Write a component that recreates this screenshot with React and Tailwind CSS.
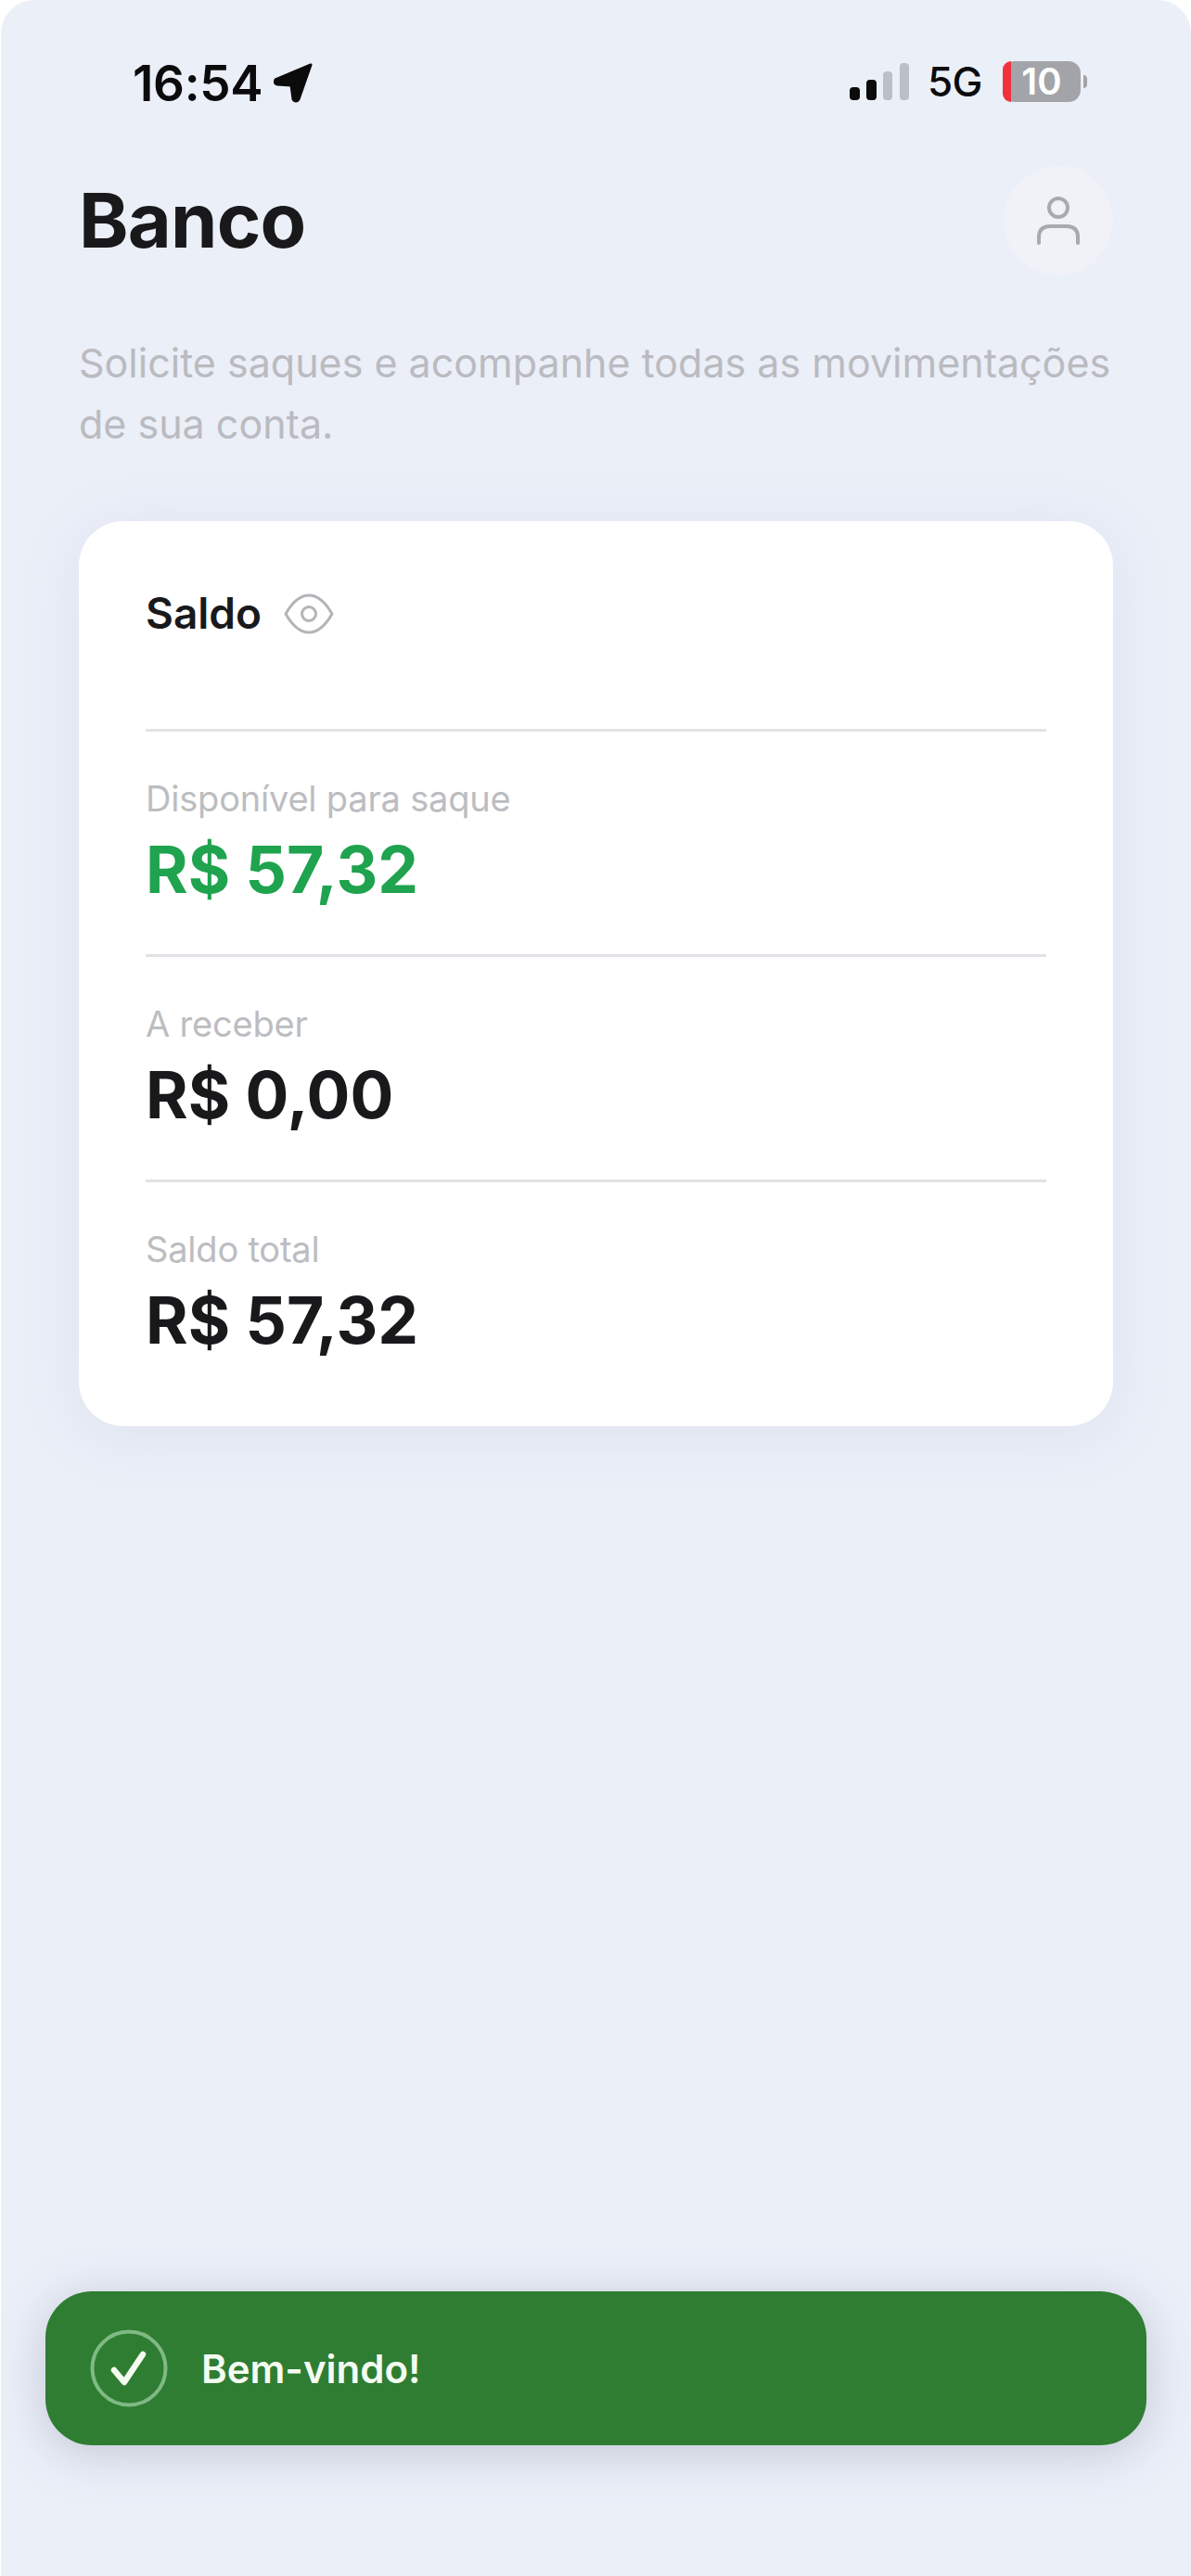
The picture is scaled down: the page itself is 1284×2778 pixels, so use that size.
import React from "react";

// Linha de saldo do cartão
function BalanceRow({ label, value, valueClass }) {
  return (
    <div className="border-t-[3px] border-[#e2e3e6] h-[243px] pt-[49px]">
      <div className="text-[38px] leading-[46px] tracking-[-0.2px] text-[#bcbdc1]">{label}</div>
      <div className={`text-[69.5px] leading-[90px] font-bold mt-[9px] ${valueClass}`}>{value}</div>
    </div>
  );
}

function StatusBar() {
  return (
    <div className="h-[178px] pl-[142px] pr-[112px] pt-[58px] flex justify-between items-start">
      <div className="flex items-center gap-[12px] h-[60px]">
        <span className="text-[53px] leading-[60px] font-semibold tracking-[-0.3px] text-[#0b0b0c] mt-[4px]">16:54</span>
        <svg width="42" height="44" viewBox="0 0 42 44" className="mt-[2px]">
          <path d="M40 3 L2 19 Q0 23 4 24 L19 25 L21 40 Q24 44 27 40 Z" fill="#0b0b0c" stroke="#0b0b0c" strokeWidth="3" strokeLinejoin="round" />
        </svg>
      </div>
      <div className="flex items-center h-[60px]">
        <svg width="64" height="40" viewBox="0 0 64 40">
          <rect x="0" y="26" width="11" height="14" rx="4" fill="#0b0b0c" />
          <rect x="18" y="18" width="11" height="22" rx="4" fill="#0b0b0c" />
          <rect x="36" y="9" width="10" height="31" rx="4" fill="#bcbfc6" />
          <rect x="54" y="0" width="10" height="40" rx="4" fill="#bcbfc6" />
        </svg>
        <span className="ml-[20px] text-[44px] leading-[60px] font-medium tracking-[-0.5px] text-[#0b0b0c]">5G</span>
        <div className="ml-[22px] relative w-[84px] h-[44px] rounded-[13px] bg-[#a3a4a9] flex items-center justify-center">
          <div className="absolute left-0 top-0 bottom-0 w-[9px] rounded-l-[13px] bg-[#f0323f]"></div>
          <span className="text-[40px] leading-[44px] font-semibold text-white">10</span>
        </div>
        <div className="ml-[3px] w-[4px] h-[14px] rounded-r-full bg-[#a3a4a9]"></div>
      </div>
    </div>
  );
}

export default function App() {
  return (
    <div className="relative w-[1284px] h-[2778px] overflow-hidden bg-white font-['Inter',sans-serif]">
      <div className="ml-[1px] h-full bg-[#ebeff8] rounded-tl-[36px] rounded-tr-[36px]">
        <StatusBar />

        {/* 헤더 */}
        <div className="pl-[84px] pr-[84px]">
          <div className="flex justify-between items-center h-[120px]">
            <h1 className="text-[81px] leading-[120px] font-bold tracking-[-0.8px] text-[#19191b]">Banco</h1>
            <div className="w-[118px] h-[118px] rounded-full bg-[#f1f2f7] flex items-center justify-center">
              <svg width="48" height="52" viewBox="0 0 48 52" fill="none" stroke="#a9aaaf" strokeWidth="4" strokeLinecap="round">
                <circle cx="24" cy="12" r="10" />
                <path d="M3 50 V44 Q3 32 15 32 H33 Q45 32 45 44 V50" />
              </svg>
            </div>
          </div>

          <p className="mt-[60px] text-[43px] leading-[66px] text-[#babbc0] whitespace-nowrap">
            Solicite saques e acompanhe todas as movimentações
            <br />
            de sua conta.
          </p>

          {/* 잔액 카드 */}
          <div className="mt-[72px] w-[1115px] h-[976px] rounded-[48px] bg-white px-[72px] shadow-[0_10px_60px_rgba(160,170,200,0.18)]">
            <div className="h-[224px] pt-[69px] flex items-start gap-[24px]">
              <span className="text-[46px] leading-[60px] font-semibold text-[#19191b]">Saldo</span>
              <svg className="mt-[9px]" width="54" height="44" viewBox="0 0 54 44" fill="none" stroke="#b3b4b8" strokeWidth="3">
                <path d="M2 22 C10 8 18 2 27 2 C36 2 44 8 52 22 C44 36 36 42 27 42 C18 42 10 36 2 22 Z" strokeLinejoin="round" />
                <circle cx="27" cy="22" r="7.5" />
              </svg>
            </div>
            <BalanceRow label="Disponível para saque" value="R$ 57,32" valueClass="text-[#1fa34e]" />
            <BalanceRow label="A receber" value="R$ 0,00" valueClass="text-[#19191b]" />
            <BalanceRow label="Saldo total" value="R$ 57,32" valueClass="text-[#19191b]" />
          </div>
        </div>
      </div>

      {/* 토스트 */}
      <div className="absolute left-[49px] top-[2471px] w-[1187px] h-[166px] rounded-[50px] bg-[#2e7d32] flex items-center pl-[48px] gap-[36px] shadow-[0_8px_50px_rgba(120,125,150,0.35)]">
        <svg width="84" height="84" viewBox="0 0 84 84" fill="none">
          <circle cx="42" cy="42" r="39.5" stroke="#7fb983" strokeWidth="4" />
          <path d="M26 44 L37 57 L57 27" stroke="#f4fbf1" strokeWidth="6.5" strokeLinecap="round" strokeLinejoin="round" />
        </svg>
        <span className="text-[42px] leading-[50px] font-semibold text-[#f4fbf1] mt-[2px]">Bem-vindo!</span>
      </div>
    </div>
  );
}
